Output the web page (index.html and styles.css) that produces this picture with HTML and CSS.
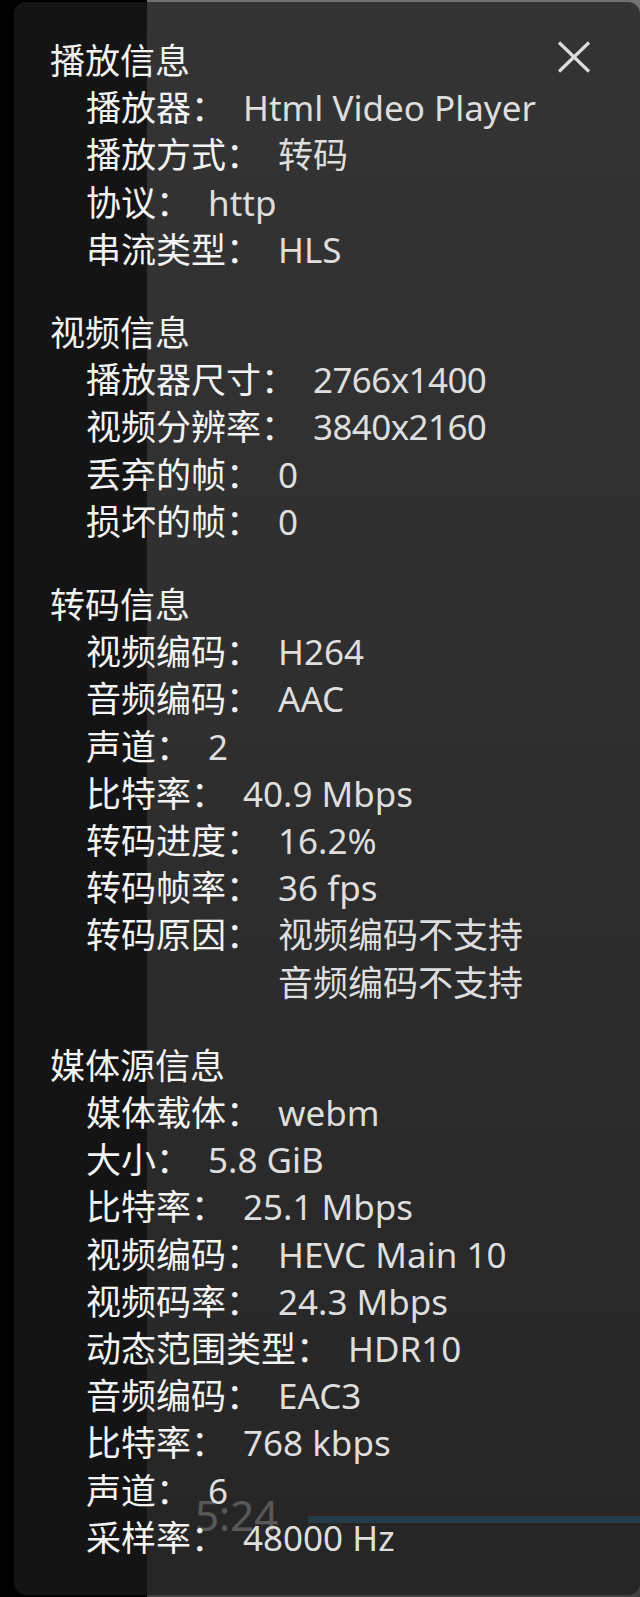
FILE: index.html
```html
<!DOCTYPE html>
<html lang="zh-CN">
<head>
<meta charset="utf-8">
<title>播放信息</title>
<link rel="stylesheet" href="styles.css">
</head>
<body>
<div class="stage">
  <div class="letterbox"></div>
  <div class="video">
    <div class="osd">
      <span class="time">5:24</span>
      <div class="seek"></div>
    </div>
  </div>
  <div class="panel">
    <section class="group">
      <div class="head">
        <h2 class="title">播放信息</h2>
        <button class="close" aria-label="关闭">
          <svg width="34" height="32" viewBox="0 0 34 32"><path d="M2 1.5 L32 30.5 M32 1.5 L2 30.5" stroke="#dcdcdc" stroke-width="3.2" fill="none"/></svg>
        </button>
      </div>
      <div class="row"><span class="k">播放器：</span><span class="v">Html Video Player</span></div>
      <div class="row"><span class="k">播放方式：</span><span class="v">转码</span></div>
      <div class="row"><span class="k">协议：</span><span class="v">http</span></div>
      <div class="row"><span class="k">串流类型：</span><span class="v">HLS</span></div>
    </section>
    <section class="group">
      <h2 class="title">视频信息</h2>
      <div class="row"><span class="k">播放器尺寸：</span><span class="v num">2766x1400</span></div>
      <div class="row"><span class="k">视频分辨率：</span><span class="v num">3840x2160</span></div>
      <div class="row"><span class="k">丢弃的帧：</span><span class="v">0</span></div>
      <div class="row"><span class="k">损坏的帧：</span><span class="v">0</span></div>
    </section>
    <section class="group">
      <h2 class="title">转码信息</h2>
      <div class="row"><span class="k">视频编码：</span><span class="v">H264</span></div>
      <div class="row"><span class="k">音频编码：</span><span class="v">AAC</span></div>
      <div class="row"><span class="k">声道：</span><span class="v">2</span></div>
      <div class="row"><span class="k">比特率：</span><span class="v">40.9 Mbps</span></div>
      <div class="row"><span class="k">转码进度：</span><span class="v">16.2%</span></div>
      <div class="row"><span class="k">转码帧率：</span><span class="v">36 fps</span></div>
      <div class="row"><span class="k">转码原因：</span><span class="v">视频编码不支持<br>音频编码不支持</span></div>
    </section>
    <section class="group">
      <h2 class="title">媒体源信息</h2>
      <div class="row"><span class="k">媒体载体：</span><span class="v">webm</span></div>
      <div class="row"><span class="k">大小：</span><span class="v">5.8 GiB</span></div>
      <div class="row"><span class="k">比特率：</span><span class="v">25.1 Mbps</span></div>
      <div class="row"><span class="k">视频编码：</span><span class="v">HEVC Main 10</span></div>
      <div class="row"><span class="k">视频码率：</span><span class="v">24.3 Mbps</span></div>
      <div class="row"><span class="k">动态范围类型：</span><span class="v">HDR10</span></div>
      <div class="row"><span class="k">音频编码：</span><span class="v">EAC3</span></div>
      <div class="row"><span class="k">比特率：</span><span class="v">768 kbps</span></div>
      <div class="row"><span class="k">声道：</span><span class="v">6</span></div>
      <div class="row"><span class="k">采样率：</span><span class="v">48000 Hz</span></div>
    </section>
  </div>
</div>
</body>
</html>
```
FILE: styles.css
```css
html, body {
  margin: 0;
  padding: 0;
  background: #000;
}

.stage {
  position: relative;
  width: 640px;
  height: 1597px;
  display: flex;
  overflow: hidden;
  font-family: "Noto Sans", "Noto Sans CJK SC", sans-serif;
}

.letterbox {
  width: 147px;
  flex: none;
  background: #000;
}

.video {
  flex: 1;
  position: relative;
  background: linear-gradient(180deg, #727272 0%, #666666 35%, #555555 65%, #404040 100%);
}

.osd {
  position: absolute;
  left: 48px;
  right: 0;
  top: 1494px;
  display: flex;
  align-items: center;
  gap: 30px;
}

.time {
  font-size: 42px;
  line-height: 42px;
  color: #f2f2f2;
}

.seek {
  flex: 1;
  height: 7px;
  margin-top: 8px;
  background: #3b8fb8;
  box-shadow: 0 -3px 0 #6a3a30;
}

.panel {
  position: absolute;
  left: 14px;
  top: 2px;
  right: 0;
  bottom: 2px;
  border-radius: 12px;
  background: rgba(28, 28, 28, 0.72);
  padding: 35px 49px 0 36px;
  color: #eeeeee;
  font-size: 35px;
  line-height: 47.2px;
}

.group + .group {
  margin-top: 36px;
}

.head {
  display: flex;
  justify-content: space-between;
  align-items: flex-start;
}

.title {
  margin: 0;
  font-size: 35px;
  font-weight: 400;
  line-height: 47.2px;
  color: #f2f2f2;
}

.close {
  margin: 4px 0 0;
  padding: 0;
  border: 0;
  background: none;
  width: 34px;
  height: 32px;
  display: block;
}

.close svg {
  display: block;
}

.row {
  display: flex;
  gap: 17px;
  padding-left: 36px;
}

.k {
  flex: none;
  white-space: nowrap;
  color: #f4f4f4;
}

.v {
  color: #dedede;
  white-space: nowrap;
}

.num {
  letter-spacing: -0.6px;
}
```
